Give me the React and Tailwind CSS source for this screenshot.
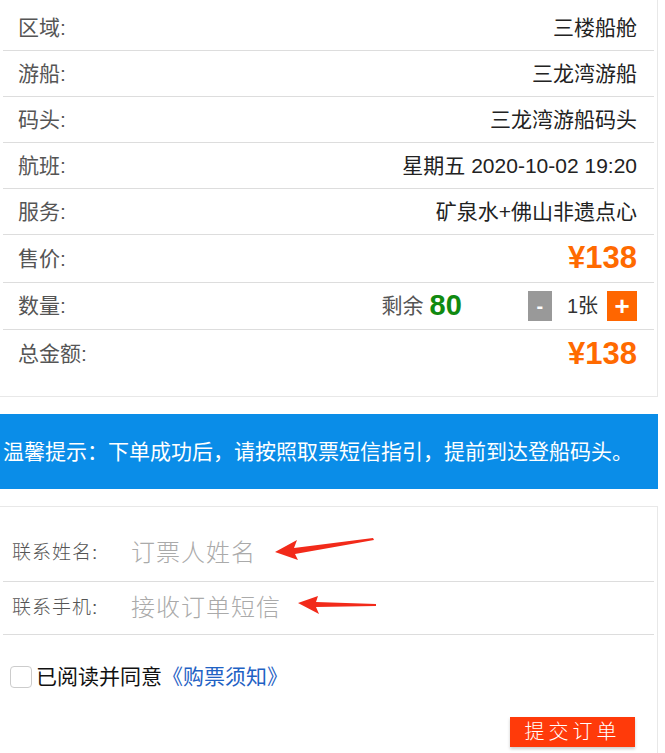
import React from "react";

const sans = { fontFamily: '"Liberation Sans", Arial, "Noto Sans CJK SC", sans-serif' };

const rows = [
  { label: "区域:", value: "三楼船舱" },
  { label: "游船:", value: "三龙湾游船" },
  { label: "码头:", value: "三龙湾游船码头" },
  { label: "航班:", value: "星期五 2020-10-02 19:20" },
  { label: "服务:", value: "矿泉水+佛山非遗点心" },
];

function Arrow({ className }) {
  return (
    <svg className={className} width="100" height="24" viewBox="0 0 100 24">
      <polygon points="0,15 22,3 19,11 98,1 99,3 20,17 23,23" fill="#f22a1a" />
    </svg>
  );
}

export default function App() {
  return (
    <div className="w-[665px] min-h-[753px] bg-white text-[20px]" style={sans}>
      {/* Order details */}
      <div className="w-[658px] border-r border-b border-[#e8e8e8] pt-[5px] pb-[18px] px-[3px]">
        {rows.map((r) => (
          <div key={r.label} className="h-[46px] flex items-center justify-between pl-[15px] pr-[17px] border-b border-[#ddd]">
            <span className="text-[#555] text-[21px]">{r.label}</span>
            <span className="text-[#222] text-[21px]">{r.value}</span>
          </div>
        ))}
        <div className="h-[48px] flex items-center justify-between pl-[15px] pr-[17px] border-b border-[#ddd]">
          <span className="text-[#555] text-[21px]">售价:</span>
          <span className="text-[#ff6a00] text-[31px] font-bold">¥138</span>
        </div>
        <div className="h-[47px] flex items-center pl-[15px] pr-[17px] border-b border-[#ddd]">
          <span className="text-[#555] text-[21px]">数量:</span>
          <span className="ml-auto text-[#555] text-[21px]">剩余</span>
          <span className="ml-[6px] text-[#108a10] text-[29px] font-bold">80</span>
          <span className="ml-[66px] w-[24px] h-[30px] bg-[#999] text-white flex items-center justify-center text-[20px] font-bold leading-none">-</span>
          <span className="ml-[15px] text-[#333]">1张</span>
          <span className="ml-[9px] w-[30px] h-[30px] bg-[#ff6600] text-white flex items-center justify-center text-[26px] font-bold leading-none">+</span>
        </div>
        <div className="h-[48px] flex items-center justify-between pl-[15px] pr-[17px]">
          <span className="text-[#555] text-[21px]">总金额:</span>
          <span className="text-[#ff6a00] text-[31px] font-bold">¥138</span>
        </div>
      </div>

      {/* Notice */}
      <div className="mt-[17px] w-[658px] h-[75px] bg-[#0a8de8] text-white text-[21px] flex items-center pl-[3px] whitespace-nowrap">
        温馨提示：下单成功后，请按照取票短信指引，提前到达登船码头。
      </div>

      {/* Contact form */}
      <div className="mt-[17px] w-[658px] border-t border-r border-b border-[#e8e8e8] pt-[18px] pb-[6px] px-[3px] relative">
        <div className="h-[57px] flex items-center pl-[9px] border-b border-[#ddd] relative">
          <span className="w-[119px] text-[19px] text-[#555] font-light tracking-[1px]">联系姓名:</span>
          <span className="text-[24px] text-[#aaa] font-light tracking-[1px]">订票人姓名</span>
          <Arrow className="absolute left-[272px] top-[12px]" />
        </div>
        <div className="h-[53px] flex items-center pl-[9px] border-b border-[#ddd] relative">
          <span className="w-[119px] text-[19px] text-[#555] font-light tracking-[1px]">联系手机:</span>
          <span className="text-[24px] text-[#aaa] font-light tracking-[1px]">接收订单短信</span>
          <svg className="absolute left-[295px] top-[14px]" width="80" height="20" viewBox="0 0 80 20">
            <polygon points="0,7 20,0 18,6 78,8 78,10 18,11 21,18" fill="#f22a1a" />
          </svg>
        </div>
        <div className="flex items-center mt-[26px] pl-[7px]">
          <span className="w-[22px] h-[22px] rounded-[4px] border border-[#ccc] bg-white"></span>
          <span className="ml-[4px] text-[21px] text-[#111]">已阅读并同意</span>
          <span className="text-[21px] text-[#1f62c4]">《购票须知》</span>
        </div>
        <div className="flex justify-end mt-[24px] pr-[19px]">
          <button className="w-[125px] h-[30px] bg-[#ff3a0a] text-white text-[20px] font-light tracking-[4px] shadow-[0_2px_3px_rgba(0,0,0,0.2)] flex items-center justify-center">
            提交订单
          </button>
        </div>
      </div>
    </div>
  );
}
